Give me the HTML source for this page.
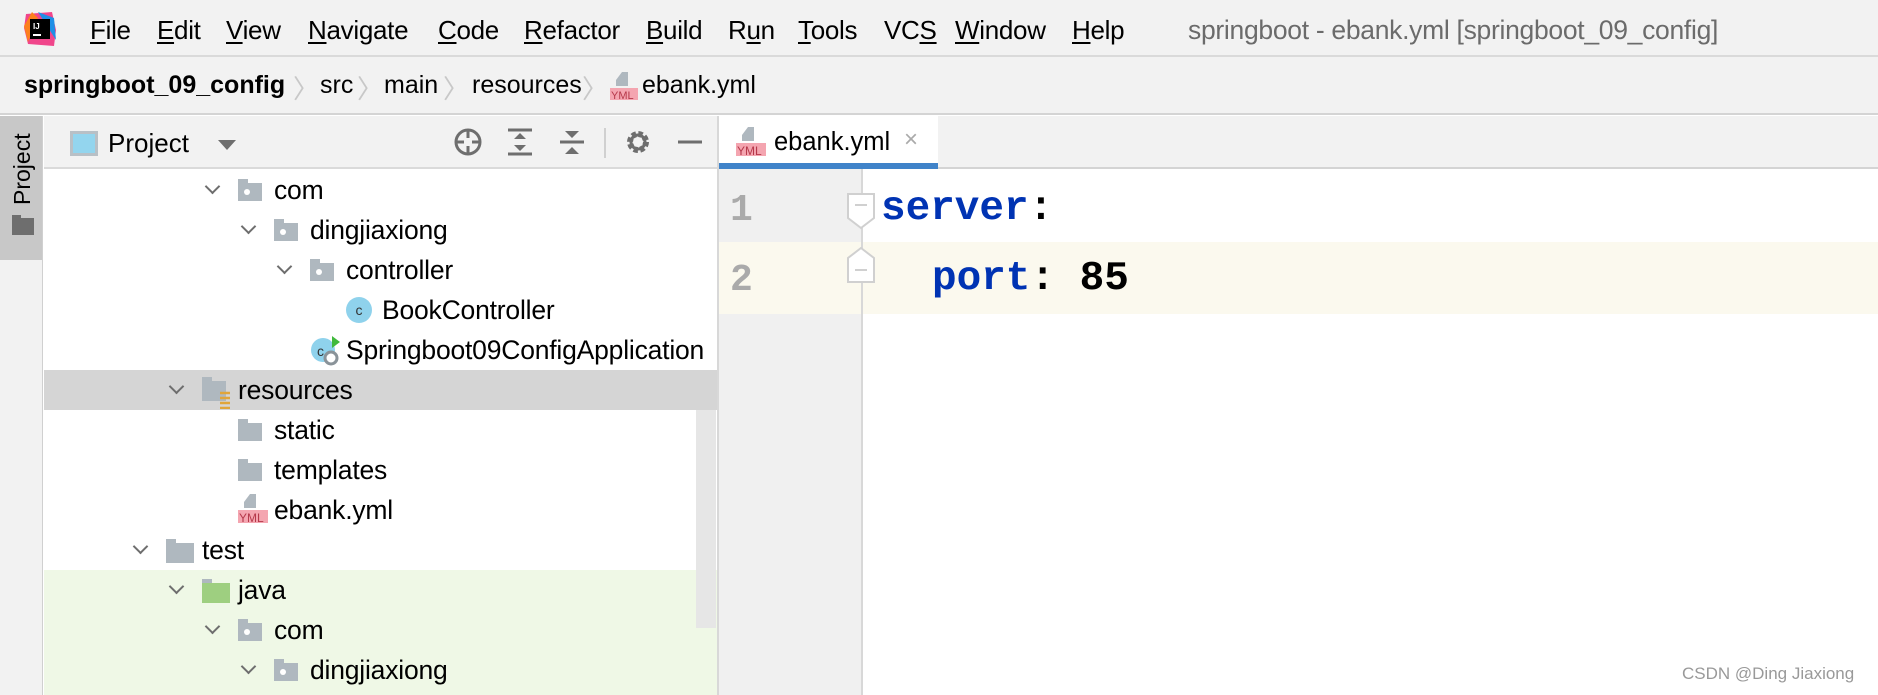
<!DOCTYPE html>
<html><head><meta charset="utf-8"><style>
*{margin:0;padding:0;box-sizing:border-box}
body{width:1878px;height:695px;overflow:hidden;background:#fff;font-family:"Liberation Sans",sans-serif;position:relative;color:#000}
.a{position:absolute;white-space:nowrap}
.menu{top:0;left:0;width:1878px;height:57px;background:#f2f2f2;border-bottom:2px solid #dadada}
.mi{position:absolute;top:15px;font-size:26px;letter-spacing:-0.3px}
.mi u{text-decoration:underline;text-underline-offset:3px}
.bc{top:57px;left:0;width:1878px;height:58px;background:#f2f2f2;border-bottom:2px solid #d4d4d4}
.t{font-size:26.5px;line-height:40px;height:40px;letter-spacing:-0.2px}
.chev{position:absolute;width:11px;height:11px;border-right:2px solid #6e6e6e;border-bottom:2px solid #6e6e6e;transform:rotate(45deg)}
.fold{position:absolute;width:24px;height:18px;background:#afb8bf}
.fold:before{content:"";position:absolute;left:0;top:-4px;width:10px;height:4px;background:#afb8bf}
.pkg:after{content:"";position:absolute;left:6px;top:6px;width:6px;height:6px;border-radius:50%;background:#fff}
</style></head><body>
<div class="a menu"></div>
<svg class="a" style="left:24px;top:12px" width="32" height="34" viewBox="0 0 32 34"><polygon points="2,2 28,0 32,18 30,34 4,32 0,16" fill="#f0468b"/><polygon points="14,0 30,6 32,28" fill="#1f8fe6"/><polygon points="0,14 8,0 14,6 4,30" fill="#fc801d"/><rect x="6" y="7" width="20" height="20" fill="#000"/><text x="9" y="17" font-size="8" fill="#fff" font-family="Liberation Sans" font-weight="bold">IJ</text><rect x="9" y="22" width="8" height="2" fill="#fff"/></svg>
<span class="mi" style="left:90px"><u>F</u>ile</span>
<span class="mi" style="left:157px"><u>E</u>dit</span>
<span class="mi" style="left:226px"><u>V</u>iew</span>
<span class="mi" style="left:308px"><u>N</u>avigate</span>
<span class="mi" style="left:438px"><u>C</u>ode</span>
<span class="mi" style="left:524px"><u>R</u>efactor</span>
<span class="mi" style="left:646px"><u>B</u>uild</span>
<span class="mi" style="left:728px">R<u>u</u>n</span>
<span class="mi" style="left:798px"><u>T</u>ools</span>
<span class="mi" style="left:884px">VC<u>S</u></span>
<span class="mi" style="left:955px"><u>W</u>indow</span>
<span class="mi" style="left:1072px"><u>H</u>elp</span>
<span class="mi" style="left:1188px;color:#6b6b6b;font-size:26.5px">springboot - ebank.yml [springboot_09_config]</span>

<div class="a bc"></div>
<span class="a" style="left:24px;top:71px;font-size:25px;font-weight:bold;letter-spacing:0">springboot_09_config</span>
<span class="a" style="left:293px;top:69px;font-size:26px;color:#c8c8c8">〉</span>
<span class="a" style="left:320px;top:71px;font-size:25px">src</span>
<span class="a" style="left:357px;top:69px;font-size:26px;color:#c8c8c8">〉</span>
<span class="a" style="left:384px;top:71px;font-size:25px">main</span>
<span class="a" style="left:443px;top:69px;font-size:26px;color:#c8c8c8">〉</span>
<span class="a" style="left:472px;top:71px;font-size:25px">resources</span>
<span class="a" style="left:582px;top:69px;font-size:26px;color:#c8c8c8">〉</span>
<svg class="a" style="left:610px;top:72px" width="28" height="28"><polygon points="12,0 18,0 18,14 6,14 6,8" fill="#afb8bf"/><rect x="0" y="16" width="28" height="12" fill="#f4a5b0"/><text x="1" y="27" font-size="11" fill="#b5384a" font-family="Liberation Sans">YML</text></svg>
<span class="a" style="left:642px;top:71px;font-size:25px">ebank.yml</span>

<div class="a" style="left:0;top:116px;width:43px;height:579px;background:#f2f2f2;border-right:1px solid #d0d0d0"></div>
<div class="a" style="left:0;top:116px;width:42px;height:144px;background:#c8c8c8"></div>
<span class="a" style="left:9px;top:205px;font-size:23px;transform:rotate(-90deg);transform-origin:0 0;">Project</span>
<svg class="a" style="left:12px;top:215px" width="22" height="20"><path d="M0 0h9v3h13v17H0z" fill="#6e6e6e"/></svg>

<div class="a" style="left:44px;top:116px;width:675px;height:53px;background:#f2f2f2;border-bottom:2px solid #dadada"></div>
<div class="a" style="left:70px;top:131px;width:28px;height:25px;border:3px solid #b8c0c6;background:#93d5ee"></div>
<span class="a" style="left:108px;top:128px;font-size:26px">Project</span>
<div class="a" style="left:218px;top:140px;border-left:9px solid transparent;border-right:9px solid transparent;border-top:10px solid #6e6e6e"></div>
<svg class="a" style="left:452px;top:126px" width="250" height="34" viewBox="0 0 250 34">
<circle cx="16" cy="16" r="12" fill="none" stroke="#6e6e6e" stroke-width="3"/><path d="M16 4v8M16 20v8M4 16h8M20 16h8" stroke="#6e6e6e" stroke-width="3"/>
<path d="M56 4h24M56 28h24" stroke="#6e6e6e" stroke-width="3"/><path d="M62 13l6-6 6 6zM62 19l6 6 6-6z" fill="#6e6e6e"/>
<path d="M108 16h24" stroke="#6e6e6e" stroke-width="3"/><path d="M113 5l7 7 7-7zM113 28l7-7 7 7z" fill="#6e6e6e"/>
<path d="M153 2v30" stroke="#d0d0d0" stroke-width="2"/>
<circle cx="186" cy="16" r="8" fill="none" stroke="#6e6e6e" stroke-width="6" stroke-dasharray="4 2.3"/><circle cx="186" cy="16" r="7" fill="none" stroke="#6e6e6e" stroke-width="3"/>
<path d="M226 16h24" stroke="#6e6e6e" stroke-width="3"/></svg>

<div class="a" style="left:44px;top:370px;width:674px;height:40px;background:#d5d5d5"></div>
<div class="a" style="left:44px;top:570px;width:674px;height:125px;background:#eff8e6"></div>
<div class="a" style="left:696px;top:410px;width:20px;height:218px;background:#e6e6e6"></div>
<div class="a" style="left:717px;top:116px;width:2px;height:579px;background:#d8d8d8"></div>

<div class="chev" style="left:207px;top:181px"></div><div class="fold pkg" style="left:238px;top:183px"></div><span class="a t" style="left:274px;top:170px">com</span>
<div class="chev" style="left:243px;top:221px"></div><div class="fold pkg" style="left:274px;top:223px"></div><span class="a t" style="left:310px;top:210px">dingjiaxiong</span>
<div class="chev" style="left:279px;top:261px"></div><div class="fold pkg" style="left:310px;top:263px"></div><span class="a t" style="left:346px;top:250px">controller</span>
<div class="a" style="left:346px;top:297px;width:26px;height:26px;border-radius:50%;background:#8fd2ec;font-size:14px;text-align:center;line-height:26px;color:#333">c</div><span class="a t" style="left:382px;top:290px">BookController</span>
<svg class="a" style="left:310px;top:334px" width="34" height="34"><circle cx="13" cy="16" r="12" fill="#8fd2ec"/><text x="7" y="22" font-size="14" fill="#333">c</text><path d="M22 2l8 6-8 6z" fill="#40b93c"/><circle cx="21" cy="24" r="6" fill="#fff" stroke="#8a9399" stroke-width="3"/></svg><span class="a t" style="left:346px;top:330px">Springboot09ConfigApplication</span>
<div class="chev" style="left:171px;top:381px"></div><svg class="a" style="left:202px;top:377px" width="30" height="32"><path d="M0 0h10v4h14v20H0z" fill="#afb8bf"/><path d="M18 16h10M18 21h10M18 26h10M18 31h10" stroke="#e0a53a" stroke-width="2.5"/></svg><span class="a t" style="left:238px;top:370px">resources</span>
<div class="fold" style="left:238px;top:423px"></div><span class="a t" style="left:274px;top:410px">static</span>
<div class="fold" style="left:238px;top:463px"></div><span class="a t" style="left:274px;top:450px">templates</span>
<svg class="a" style="left:238px;top:494px" width="30" height="30"><polygon points="12,0 18,0 18,14 6,14 6,8" fill="#afb8bf"/><rect x="0" y="16" width="30" height="13" fill="#f4a5b0"/><text x="1" y="28" font-size="12" fill="#b5384a" font-family="Liberation Sans">YML</text></svg><span class="a t" style="left:274px;top:490px">ebank.yml</span>
<div class="chev" style="left:135px;top:541px"></div><div class="fold" style="left:166px;top:543px;width:28px;height:20px"></div><span class="a t" style="left:202px;top:530px">test</span>
<div class="chev" style="left:171px;top:581px"></div><div class="fold" style="left:202px;top:583px;width:28px;height:20px;background:#9ecf80"></div><span class="a t" style="left:238px;top:570px">java</span>
<div class="chev" style="left:207px;top:621px"></div><div class="fold pkg" style="left:238px;top:623px"></div><span class="a t" style="left:274px;top:610px">com</span>
<div class="chev" style="left:243px;top:661px"></div><div class="fold pkg" style="left:274px;top:663px"></div><span class="a t" style="left:310px;top:650px">dingjiaxiong</span>

<div class="a" style="left:719px;top:116px;width:1159px;height:53px;background:#f2f2f2;border-bottom:2px solid #d4d4d4"></div>
<div class="a" style="left:719px;top:116px;width:219px;height:53px;background:#fff;border-bottom:6px solid #4083c9"></div>
<svg class="a" style="left:736px;top:127px" width="30" height="30"><polygon points="12,0 18,0 18,14 6,14 6,8" fill="#afb8bf"/><rect x="0" y="16" width="30" height="13" fill="#f4a5b0"/><text x="1" y="28" font-size="12" fill="#b5384a" font-family="Liberation Sans">YML</text></svg>
<span class="a" style="left:774px;top:128px;font-size:25.5px">ebank.yml</span>
<span class="a" style="left:904px;top:126px;font-size:24px;color:#aaa">×</span>
<div class="a" style="left:719px;top:169px;width:143px;height:526px;background:#f0f0f0"></div>
<div class="a" style="left:719px;top:242px;width:1159px;height:72px;background:#fbf9ee"></div>
<div class="a" style="left:861px;top:169px;width:2px;height:526px;background:#d8d8d8"></div>
<span class="a" style="left:730px;top:189px;font-family:'Liberation Mono',monospace;font-size:38px;font-weight:bold;color:#aaa">1</span>
<span class="a" style="left:730px;top:259px;font-family:'Liberation Mono',monospace;font-size:38px;font-weight:bold;color:#aaa">2</span>
<svg class="a" style="left:846px;top:192px" width="32" height="100"><path d="M2 2h26v24l-13 10-13-10z" fill="#fff" stroke="#d0d0d0" stroke-width="2"/><path d="M9 13h12" stroke="#d0d0d0" stroke-width="2"/><path d="M2 90h26v-24l-13-10-13 10z" fill="#fff" stroke="#d0d0d0" stroke-width="2"/><path d="M9 78h12" stroke="#d0d0d0" stroke-width="2"/></svg>
<span class="a" style="left:881px;top:186px;font-family:'Liberation Mono',monospace;font-size:41px;font-weight:bold;color:#0033b3">server<span style="color:#000">:</span></span>
<span class="a" style="left:932px;top:256px;font-family:'Liberation Mono',monospace;font-size:41px;font-weight:bold;color:#0033b3">port<span style="color:#000">: 85</span></span>
<span class="a" style="left:1682px;top:664px;font-size:17px;color:#999">CSDN @Ding Jiaxiong</span>
</body></html>
